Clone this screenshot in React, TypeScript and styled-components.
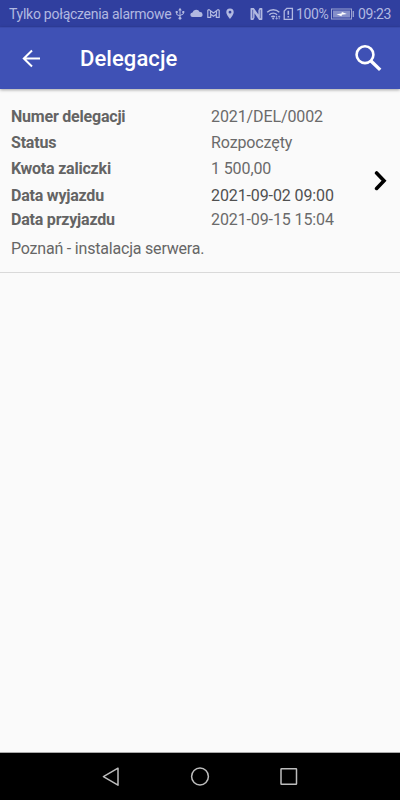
import React from "react";
import styled, { createGlobalStyle } from "styled-components";

const GlobalStyle = createGlobalStyle`
  * { box-sizing: border-box; }
  body { margin: 0; background: #fafafa; font-family: Roboto, "Noto Sans", sans-serif; }
`;

const Screen = styled.div`
  display: flex;
  flex-direction: column;
  width: 400px;
  height: 800px;
  background: #fafafa;
  overflow: hidden;
`;

const StatusBar = styled.div`
  display: flex;
  align-items: center;
  flex: none;
  height: 27px;
  padding: 1px 0 0 9px;
  background: #303f9f;
  color: #b2b9e1;
`;

const StatusText = styled.span<{ $width: number; $spacing?: number; $gap?: number }>`
  flex: none;
  width: ${(p) => p.$width}px;
  margin-left: ${(p) => p.$gap ?? 0}px;
  font-size: 14px;
  line-height: 20px;
  letter-spacing: ${(p) => p.$spacing ?? 0}px;
  white-space: nowrap;
`;

const Glyph = styled.svg<{ $gap?: number }>`
  display: block;
  flex: none;
  margin-left: ${(p) => p.$gap ?? 0}px;
`;

const AppBar = styled.header`
  display: flex;
  align-items: center;
  flex: none;
  height: 62px;
  padding: 0 17px 0 20px;
  background: #3f51b5;
  border-top: 1px solid #394aab;
  box-shadow: 0 1px 3px rgba(0, 0, 0, 0.35);
  color: #fff;
`;

const Title = styled.h1`
  flex: 1;
  margin: 0 0 0 37px;
  font-size: 22px;
  font-weight: 500;
  line-height: 30px;
  letter-spacing: 0.08px;
`;

const Entry = styled.article`
  display: flex;
  align-items: center;
  height: 184px;
  padding: 0 13px 0 11px;
  border-bottom: 1px solid #d9d9d9;
`;

const Details = styled.div`
  flex: 1;
  height: 100%;
  padding-top: 18px;
  color: #666;
  font-size: 16px;
`;

const Field = styled.div<{ $height: number; $dark?: boolean }>`
  display: grid;
  grid-template-columns: 200px 1fr;
  height: ${(p) => p.$height}px;
  line-height: 20px;
  color: ${(p) => (p.$dark ? "#505050" : "#6a6a6a")};
`;

const Label = styled.span`
  font-weight: 700;
  letter-spacing: -0.21px;
  color: #646464;
`;

const Value = styled.span`
  letter-spacing: -0.11px;
  white-space: nowrap;
`;

const Description = styled.p`
  margin: 5px 0 0;
  letter-spacing: -0.2px;
  line-height: 20px;
`;

const Content = styled.main`
  flex: 1;
`;

const NavBar = styled.nav`
  display: flex;
  align-items: center;
  justify-content: space-between;
  flex: none;
  height: 48px;
  padding: 0 101px;
  background: #000;
  border-top: 1px solid #aaa;
`;

const fields = [
  { label: "Numer delegacji", value: "2021/DEL/0002", height: 26 },
  { label: "Status", value: "Rozpoczęty", height: 26 },
  { label: "Kwota zaliczki", value: "1 500,00", height: 27 },
  { label: "Data wyjazdu", value: "2021-09-02 09:00", height: 24, dark: true },
  { label: "Data przyjazdu", value: "2021-09-15 15:04", height: 24 },
];

const StatusIcons = () => (
  <>
    <Glyph width="10" height="14" viewBox="0 0 10 14" fill="none" stroke="currentColor" strokeWidth="1">
      <path d="M5 2v9M1.7 5v2.5L5 9M8.3 5v2L5 8.5" />
      <path d="M5 .8 6.8 3.5H3.2zM.7 4h2v2h-2zM7.3 4h2v2h-2z" fill="currentColor" stroke="none" />
      <circle cx="5" cy="11.3" r="1.4" fill="currentColor" stroke="none" />
    </Glyph>
    <Glyph $gap={5} width="13" height="14" viewBox="0 0 13 14" fill="currentColor">
      <path d="M2.7 10a2.3 2.3 0 0 1-.2-4.6A3.9 3.9 0 0 1 9.7 5 2.5 2.5 0 0 1 10.4 10z" />
    </Glyph>
    <Glyph $gap={4} width="13" height="14" viewBox="0 0 13 14" fill="none" stroke="currentColor" strokeWidth="1.2" strokeLinejoin="round">
      <path d="M.8 3.3 2.1 2.6 6.5 6l4.4-3.4 1.3.7v7.1H9.3V7.2L6.5 9.3 3.7 7.2v3.2H.8zM3.5 3.7v3.5M9.5 3.7v3.5" />
    </Glyph>
    <Glyph $gap={6} width="8" height="14" viewBox="0 0 8 14" fill="currentColor" fillRule="evenodd">
      <path d="M4 1.4a3.7 3.7 0 0 0-3.7 3.8C.3 7.7 4 12 4 12s3.7-4.3 3.7-6.8A3.7 3.7 0 0 0 4 1.4M4 3.8a1.4 1.4 0 1 1 0 2.8 1.4 1.4 0 0 1 0-2.8" />
    </Glyph>
    <Glyph $gap={16} width="13" height="14" viewBox="0 0 13 14" fill="currentColor">
      <path d="M.5 1.6Q.5.9 1.2.9h2.6l4.6 6.6V3.2l1.2-2.3h2q.8 0 .8.8v10.6q0 .7-.7.7H9.1L4.5 6.3v4.4L3.3 13H1.2q-.7 0-.7-.7z" />
      <path d="M2.7 2.8v8.4M10.3 2.8v8.4" stroke="#303f9f" strokeWidth=".7" />
    </Glyph>
    <Glyph $gap={3} width="16" height="14" viewBox="0 0 16 14" fill="none" stroke="currentColor" strokeWidth="1.5">
      <path d="M1.2 5.2a9 9 0 0 1 12.1 0M3.3 7.7a6 6 0 0 1 7.8 0M5.3 9.9a3 3 0 0 1 3.7 0" />
      <circle cx="7.2" cy="11.5" r="1" fill="currentColor" stroke="none" />
      <path d="M10.6 8.8v3.5M13.2 8.8v3.5M9.6 11l1 1.2 1-1.2M12.2 10.1l1-1.2 1 1.2" strokeWidth=".8" />
    </Glyph>
    <Glyph $gap={1} width="11" height="14" viewBox="0 0 11 14" fill="none" stroke="currentColor" strokeWidth="1.3">
      <path d="M3.8 1.4h5.6v10.9H1.2V4z" />
      <path d="M5.3 3.8v4M5.3 8.9v1.6" strokeWidth="1.6" />
    </Glyph>
  </>
);

export default function App() {
  return (
    <Screen>
      <GlobalStyle />
      <StatusBar>
        <StatusText $width={166} $spacing={-0.27}>Tylko połączenia alarmowe</StatusText>
        <StatusIcons />
        <StatusText $width={33} $gap={2} $spacing={-0.35}>100%</StatusText>
        <Glyph $gap={2} width="24" height="12" viewBox="0 0 24 12">
          <rect x=".5" y="1" width="20" height="10" fill="none" stroke="#9aa3d2" />
          <path d="M2 2.5h17v7H2z" fill="#858fc9" />
          <path d="m5.5 6.3 5-.8.4-1.5 5 2.1-5 .7-.4 1.5z" fill="#fff" />
          <path d="M22.3 3v6" stroke="#9aa3d2" strokeWidth="1.3" />
        </Glyph>
        <StatusText $width={36} $gap={3} $spacing={-0.35}>09:23</StatusText>
      </StatusBar>
      <AppBar>
        <Glyph width="23" height="24" viewBox="0 0 23 24" fill="none" stroke="currentColor" strokeWidth="2">
          <path d="M20 11.5H4M12 3.5l-8.2 8 8.2 8" />
        </Glyph>
        <Title>Delegacje</Title>
        <Glyph width="30" height="30" viewBox="0 0 30 30" fill="none" stroke="currentColor">
          <circle cx="12" cy="10.7" r="8.4" strokeWidth="2.6" />
          <path d="m18 17 9.2 8.9" strokeWidth="3.4" />
        </Glyph>
      </AppBar>
      <Content>
        <Entry>
          <Details>
            {fields.map((field) => (
              <Field key={field.label} $height={field.height} $dark={field.dark}>
                <Label>{field.label}</Label>
                <Value>{field.value}</Value>
              </Field>
            ))}
            <Description>Poznań - instalacja serwera.</Description>
          </Details>
          <Glyph width="13" height="20" viewBox="0 0 13 20" fill="none" stroke="#000" strokeWidth="3.6" strokeLinecap="round" strokeLinejoin="miter">
            <path d="m2.6 2 7.4 7.7-7.4 7.7" />
          </Glyph>
        </Entry>
      </Content>
      <NavBar>
        <Glyph width="20" height="22" viewBox="0 0 20 22" fill="none" stroke="#bdbdbd" strokeWidth="1.5" strokeLinejoin="round">
          <path d="M17 2.2v17L2.4 10.7z" />
        </Glyph>
        <Glyph width="20" height="22" viewBox="0 0 20 22" fill="none" stroke="#bdbdbd" strokeWidth="1.5">
          <circle cx="10" cy="10.5" r="8.4" />
        </Glyph>
        <Glyph width="20" height="22" viewBox="0 0 20 22" fill="none" stroke="#bdbdbd" strokeWidth="1.5">
          <rect x="2" y="2.7" width="15.5" height="15.5" rx=".5" />
        </Glyph>
      </NavBar>
    </Screen>
  );
}
